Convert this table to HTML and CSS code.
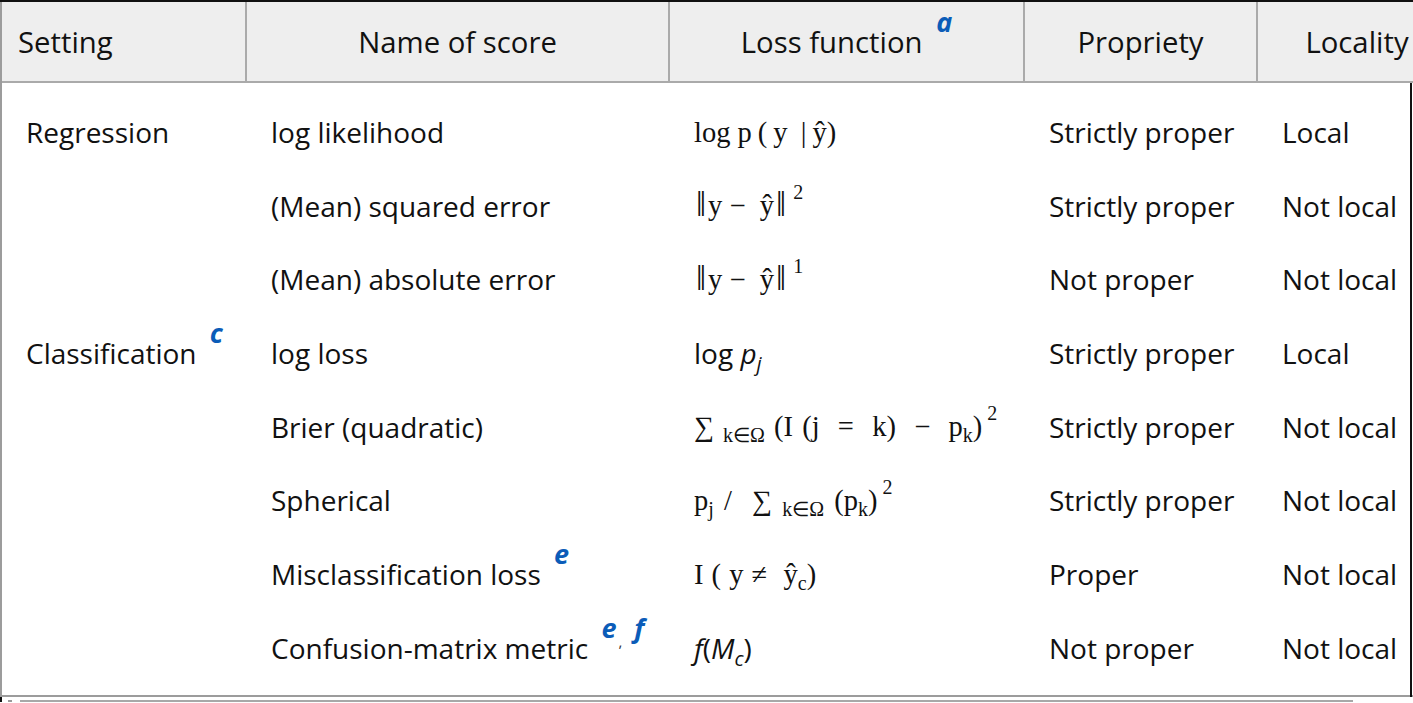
FILE: index.html
```html
<!DOCTYPE html>
<html lang="en">
<head>
<meta charset="utf-8">
<title>Scoring rules</title>
<link rel="stylesheet" href="styles.css">
</head>
<body>
<div class="frame">
  <div class="scroller">
    <table class="scores">
      <colgroup>
        <col class="w1"><col class="w2"><col class="w3"><col class="w4"><col class="w5">
      </colgroup>
      <thead>
        <tr>
          <th class="left">Setting</th>
          <th>Name of score</th>
          <th>Loss function <sup class="fn">a</sup></th>
          <th>Propriety</th>
          <th>Locality</th>
        </tr>
      </thead>
      <tbody>
        <tr class="first">
          <td>Regression</td>
          <td>log likelihood</td>
          <td><span class="m">log p<span class="sp"></span>(<span class="sp"></span>y <span class="sp"></span>|<span class="sp"></span>ŷ)</span></td>
          <td>Strictly proper</td>
          <td>Local</td>
        </tr>
        <tr>
          <td></td>
          <td>(Mean) squared error</td>
          <td><span class="m"><span class="nrm">‖</span>y − &nbsp;ŷ<span class="nrm">‖</span><span class="msup">2</span></span></td>
          <td>Strictly proper</td>
          <td>Not local</td>
        </tr>
        <tr>
          <td></td>
          <td>(Mean) absolute error</td>
          <td><span class="m"><span class="nrm">‖</span>y − &nbsp;ŷ<span class="nrm">‖</span><span class="msup">1</span></span></td>
          <td>Not proper</td>
          <td>Not local</td>
        </tr>
        <tr>
          <td>Classification <sup class="fn">c</sup></td>
          <td>log loss</td>
          <td>log <i>p<sub class="isub">j</sub></i></td>
          <td>Strictly proper</td>
          <td>Local</td>
        </tr>
        <tr>
          <td></td>
          <td>Brier (quadratic)</td>
          <td><span class="m brier"><span class="sum">∑</span> <span class="msub">k∈Ω</span> (I (j &nbsp;= &nbsp;k) &nbsp;− &nbsp;p<span class="msub">k</span>)<span class="msup">2</span></span></td>
          <td>Strictly proper</td>
          <td>Not local</td>
        </tr>
        <tr>
          <td></td>
          <td>Spherical</td>
          <td><span class="m wide">p<span class="msub">j</span> / &nbsp;<span class="sum">∑</span> <span class="msub">k∈Ω</span> (p<span class="msub">k</span>)<span class="msup">2</span></span></td>
          <td>Strictly proper</td>
          <td>Not local</td>
        </tr>
        <tr>
          <td></td>
          <td>Misclassification loss <sup class="fn">e</sup></td>
          <td><span class="m mis">I ( y ≠ &nbsp;ŷ<span class="msub">c</span>)</span></td>
          <td>Proper</td>
          <td>Not local</td>
        </tr>
        <tr class="last">
          <td></td>
          <td>Confusion-matrix metric <sup class="fn">e<span class="fn-comma">,</span>f</sup></td>
          <td><i>f</i>(<i>M<sub class="isub">c</sub></i>)</td>
          <td>Not proper</td>
          <td>Not local</td>
        </tr>
      </tbody>
    </table>
    <div class="edge"></div>
  </div>
  <div class="hscroll"><div class="arrow"></div><div class="thumb"></div></div>
</div>
</body>
</html>
```

FILE: styles.css
```css
html, body {
  margin: 0;
  padding: 0;
  background: #ffffff;
  overflow: hidden;
}

body {
  font-family: "Open Sans", "Noto Sans", sans-serif;
  font-size: 28px;
  color: #111111;
}

.frame {
  width: 1413px;
  height: 703px;
  overflow: hidden;
}

.scroller {
  position: relative;
  width: 1413px;
  overflow: hidden;
  border-top: 2px solid #111111;
}

.scores {
  width: 1456px;
  table-layout: fixed;
  border-collapse: separate;
  border-spacing: 0;
  border-left: 2px solid #9c9c9c;
  border-bottom: 2px solid #9c9c9c;
}

.w1 { width: 245px; }
.w2 { width: 423px; }
.w3 { width: 355px; }
.w4 { width: 233px; }
.w5 { width: 200px; }

.scores th {
  height: 77px;
  padding: 2px 14px 0;
  background: #eeeeee;
  font-weight: 500;
  font-size: 29.3px;
  text-align: center;
  border-right: 2px solid #aaaaaa;
  border-bottom: 2px solid #aaaaaa;
  white-space: nowrap;
  line-height: 1;
}

.scores th.left {
  text-align: left;
  padding-left: 16px;
}

.scores td {
  height: 73.7px;
  padding: 0 24px;
  white-space: nowrap;
  vertical-align: middle;
  line-height: 1;
}

.scores tr.first td {
  padding-top: 12px;
}

.scores tr.last td {
  padding-bottom: 10px;
}

.fn {
  position: relative;
  top: -21px;
  vertical-align: baseline;
  font-style: italic;
  font-weight: 700;
  color: #0b5cb8;
  font-size: 27px;
  line-height: 0;
  margin-left: 6px;
}

.fn-comma {
  position: relative;
  top: 9px;
  font-size: 15px;
  font-weight: 400;
  font-style: normal;
  color: #333333;
  margin-left: 2px;
  margin-right: 12px;
}

.m {
  font-family: "Liberation Serif", "Times New Roman", serif;
  font-size: 28.5px;
  color: #111111;
}

.m.wide {
  word-spacing: 3px;
}

.m.brier {
  word-spacing: 2px;
}

.m.mis {
  word-spacing: 1px;
}

.sp {
  display: inline-block;
  width: 6px;
}

.nrm {
  display: inline-block;
  font-size: 36px;
  line-height: 0;
  margin: 0 2px;
  vertical-align: -1px;
}

.msup {
  font-size: 20px;
  vertical-align: 0.8em;
  line-height: 0;
  margin-left: 5px;
}

.msub {
  font-size: 20px;
  vertical-align: -0.3em;
  line-height: 0;
}

.sum {
  font-size: 28px;
}

.isub {
  font-size: 20px;
  vertical-align: -0.35em;
  line-height: 0;
}

.edge {
  position: absolute;
  left: 1410px;
  top: 81px;
  width: 2px;
  bottom: 0;
  background: #111111;
}

.hscroll {
  display: flex;
  align-items: flex-end;
  height: 5px;
  border-left: 2px solid #111111;
}

.arrow {
  width: 4px;
  height: 2px;
  margin-left: 6px;
  background: #9a9a9a;
}

.thumb {
  width: 1333px;
  height: 2px;
  margin-left: 8px;
  background: #a8a8a8;
}
```
